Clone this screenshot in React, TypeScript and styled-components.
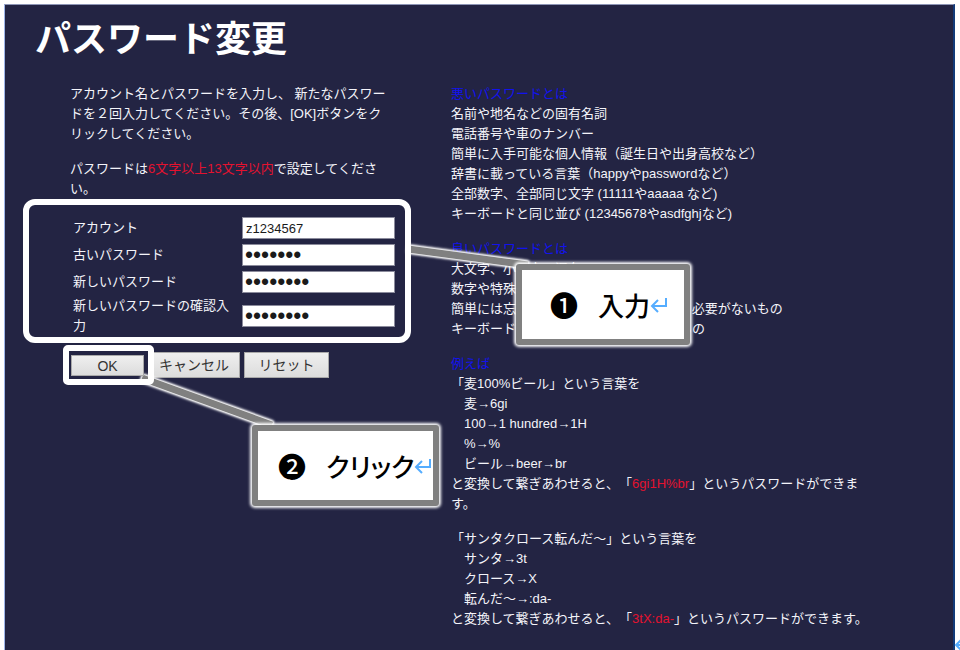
import React from "react";
import styled, { createGlobalStyle } from "styled-components";

const GlobalStyle = createGlobalStyle`
  * { box-sizing: border-box; }
  body {
    margin: 0;
    background: #ffffff;
    font-family: "Liberation Sans", "Noto Sans CJK JP", sans-serif;
    text-spacing-trim: space-all;
  }
`;

const Page = styled.div`
  position: relative;
  min-height: 100vh;
  padding: 4px 5px 0 4px;
  overflow: hidden;
  display: flex;
`;

const Panel = styled.main`
  flex: 1;
  padding: 11px 18px 20px;
  background: #232443;
  color: #f4f4fa;
  border-top: 1px solid #8d95b5;
  border-left: 1px solid #9db4e8;
  border-right: 2px solid #123a78;
  font-size: 13px;
  line-height: 20px;
`;

const Title = styled.h1`
  margin: 0 0 20px;
  padding-left: 12px;
  font-size: 36px;
  line-height: 48px;
  font-weight: 700;
  color: #ffffff;
`;

const Columns = styled.div`
  display: flex;
  align-items: flex-start;
  gap: 40px;
`;

const FormColumn = styled.form`
  flex: 0 0 388px;
`;

const Intro = styled.p`
  margin: 0 20px 0 47px;
  & + & { margin-top: 15px; }
`;

const Strong = styled.span`
  color: #e4122f;
`;

const Frame = styled.div`
  position: relative;
  z-index: 2;
  padding: 9px 0 0 44px;
  border: 6px solid #ffffff;
  border-radius: 12px;
`;

const Fields = styled.table`
  border-collapse: separate;
  border-spacing: 0 1px;
`;

const LabelCell = styled.th`
  width: 169px;
  height: 26px;
  padding: 0 9px 0 0;
  font-weight: 400;
  text-align: left;
`;

const FieldCell = styled.td`
  padding: 0;
`;

const Field = styled.input`
  display: block;
  width: 153px;
  height: 22px;
  padding: 0 3px;
  border: 1px solid #8b8b9c;
  border-radius: 0;
  background: #ffffff;
  color: #1a1a1a;
  font: 13px "Liberation Sans", sans-serif;
  &[type="password"] {
    padding: 0 2px;
    font-size: 23px;
    line-height: 20px;
  }
`;

const Buttons = styled.div`
  display: flex;
  align-items: center;
  gap: 4px;
  margin-top: 2px;
  padding-left: 40px;
`;

const Highlight = styled.span`
  position: relative;
  z-index: 2;
  display: flex;
  margin-right: -10px;
  padding: 4px 4px 3px 2px;
  border: 6px solid #ffffff;
  border-radius: 5px;
`;

const Button = styled.button<{ $compact?: boolean }>`
  width: ${(p) => (p.$compact ? 73 : p.type === "reset" ? 85 : 92)}px;
  height: ${(p) => (p.$compact ? 21 : 26)}px;
  padding: 0;
  border: 1px solid #a9a9a9;
  border-radius: 0;
  background: linear-gradient(#efefef, #dcdcdc);
  color: #333333;
  font: 14px "Liberation Sans", "Noto Sans CJK JP", sans-serif;
  line-height: 18px;
`;

const Guide = styled.div`
  flex: 0 1 428px;
  min-width: 0;
`;

const Section = styled.section`
  & + & { margin-top: 15px; }
`;

const Heading = styled.h2`
  margin: 0;
  font-size: 13px;
  line-height: 20px;
  font-weight: 400;
  color: #1212ee;
`;

const Line = styled.p<{ $indent?: boolean }>`
  margin: 0;
  padding-left: ${(p) => (p.$indent ? 13 : 0)}px;
`;

const Connectors = styled.svg`
  position: absolute;
  z-index: 1;
  top: 0;
  left: 0;
  filter: drop-shadow(0 0 1px #fff) drop-shadow(0 0 1px #fff) drop-shadow(0 0 1px #fff);
`;

const Callout = styled.aside<{ $left: number; $top: number; $width: number; $start: number }>`
  position: absolute;
  z-index: 3;
  left: ${(p) => p.$left}px;
  top: ${(p) => p.$top}px;
  width: ${(p) => p.$width}px;
  height: 81px;
  padding-left: ${(p) => p.$start}px;
  display: flex;
  align-items: center;
  border: 6px solid #808080;
  border-radius: 3px;
  background: #ffffff;
  box-shadow: 0 0 3px 2px #ffffff;
  color: #000000;
  font: 500 26px "Noto Sans CJK JP", sans-serif;
  line-height: 40px;
  white-space: nowrap;
`;

const Step = styled.span`
  margin-right: 20px;
  font-size: 28px;
`;

const Action = styled.span`
  font-feature-settings: "palt";
`;

const Mark = styled.svg`
  display: block;
  flex: none;
`;

const EdgeMark = styled.div`
  position: absolute;
  left: 954px;
  top: 636px;
`;

const ReturnMark = () => (
  <Mark width="18" height="16" viewBox="0 0 18 16" fill="none" stroke="#55adff" strokeWidth="2" aria-hidden="true">
    <path d="M16 1v8H3M8 3L2 9l6 6" />
  </Mark>
);

const fields = [
  { id: "account", label: "アカウント", type: "text", value: "z1234567" },
  { id: "old", label: "古いパスワード", type: "password", value: "abcdefg" },
  { id: "new", label: "新しいパスワード", type: "password", value: "abcdefgh" },
  { id: "confirm", label: "新しいパスワードの確認入力", type: "password", value: "abcdefgh" },
];

export default function App() {
  return (
    <Page lang="ja">
      <GlobalStyle />
      <Panel>
        <Title>パスワード変更</Title>
        <Columns>
          <FormColumn onSubmit={(e) => e.preventDefault()}>
            <Intro>
              アカウント名とパスワードを入力し、 新たなパスワードを２回入力してください。その後、[OK]ボタンをクリックしてください。
            </Intro>
            <Intro>
              パスワードは<Strong>6文字以上13文字以内</Strong>で設定してください。
            </Intro>
            <Frame>
              <Fields>
                <tbody>
                  {fields.map((f) => (
                    <tr key={f.id}>
                      <LabelCell scope="row">
                        <label htmlFor={f.id}>{f.label}</label>
                      </LabelCell>
                      <FieldCell>
                        <Field id={f.id} type={f.type} defaultValue={f.value} autoComplete="off" />
                      </FieldCell>
                    </tr>
                  ))}
                </tbody>
              </Fields>
            </Frame>
            <Buttons>
              <Highlight>
                <Button type="submit" $compact>OK</Button>
              </Highlight>
              <Button type="button">キャンセル</Button>
              <Button type="reset">リセット</Button>
            </Buttons>
          </FormColumn>
          <Guide>
            <Section>
              <Heading>悪いパスワードとは</Heading>
              <Line>名前や地名などの固有名詞</Line>
              <Line>電話番号や車のナンバー</Line>
              <Line>簡単に入手可能な個人情報（誕生日や出身高校など）</Line>
              <Line>辞書に載っている言葉（happyやpasswordなど）</Line>
              <Line>全部数字、全部同じ文字 (11111やaaaaa など)</Line>
              <Line>キーボードと同じ並び (12345678やasdfghjなど)</Line>
            </Section>
            <Section>
              <Heading>良いパスワードとは</Heading>
              <Line>大文字、小文字の混在</Line>
              <Line>数字や特殊文字を含むもの</Line>
              <Line>簡単には忘れない、 紙に 書き留めておく必要がないもの</Line>
              <Line>キーボードを見ずに 素早く 入力できるもの</Line>
            </Section>
            <Section>
              <Heading>例えば</Heading>
              <Line>「麦100%ビール」という言葉を</Line>
              <Line $indent>麦→6gi</Line>
              <Line $indent>100→1 hundred→1H</Line>
              <Line $indent>%→%</Line>
              <Line $indent>ビール→beer→br</Line>
              <Line>
                と変換して繋ぎあわせると、「<Strong>6gi1H%br</Strong>」というパスワードができます。
              </Line>
            </Section>
            <Section>
              <Line>「サンタクロース転んだ～」という言葉を</Line>
              <Line $indent>サンタ→3t</Line>
              <Line $indent>クロース→X</Line>
              <Line $indent>転んだ～→:da-</Line>
              <Line>
                と変換して繋ぎあわせると、「<Strong>3tX:da-</Strong>」というパスワードができます。
              </Line>
            </Section>
          </Guide>
        </Columns>
      </Panel>
      <Connectors width="560" height="450" stroke="#808080" strokeWidth="7" aria-hidden="true">
        <path d="M408 249L528 265M142 378L272 425" />
      </Connectors>
      <Callout $left={516} $top={264} $width={174} $start={28}>
        <Step>❶</Step>
        <Action>入力</Action>
        <ReturnMark />
      </Callout>
      <Callout $left={252} $top={425} $width={187} $start={20}>
        <Step>❷</Step>
        <Action>クリック</Action>
        <ReturnMark />
      </Callout>
      <EdgeMark>
        <ReturnMark />
      </EdgeMark>
    </Page>
  );
}
